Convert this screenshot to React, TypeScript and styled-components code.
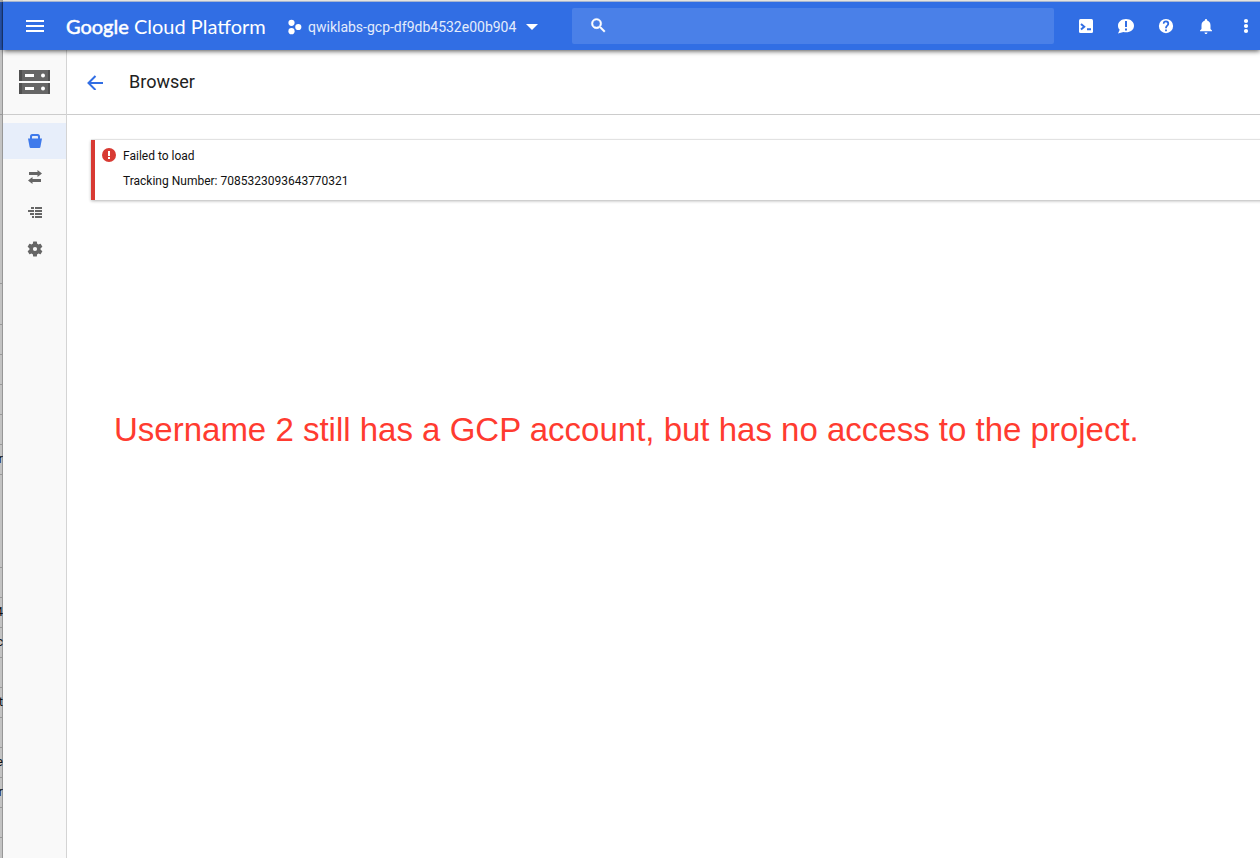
import React from "react";
import styled, { createGlobalStyle } from "styled-components";

const GlobalStyle = createGlobalStyle`
  *, *::before, *::after { box-sizing: border-box; }
  body {
    margin: 0;
    background: #fff;
    color: #212121;
    font-family: Roboto, "Liberation Sans", sans-serif;
    overflow: hidden;
  }
  button {
    display: flex;
    align-items: center;
    justify-content: center;
    padding: 0;
    border: 0;
    background: none;
    color: inherit;
    font: inherit;
    cursor: pointer;
  }
  svg { display: block; flex: none; }
`;

const Screen = styled.div`
  display: flex;
  height: 100vh;
  overflow: hidden;
`;

const Backdrop = styled.aside`
  flex: 0 0 3px;
  overflow: hidden;
  background: linear-gradient(90deg, #c3c3c3 0 66%, #979797 66%);
  font-size: 13px;
`;

const BackdropBar = styled.div`
  height: 50px;
  border-top: 2px solid #b4b4b4;
  background: linear-gradient(90deg, #2859b8 0 66%, #204690 66%);
`;

const BackdropRow = styled.div<{ $height: number }>`
  display: flex;
  align-items: center;
  justify-content: flex-end;
  height: ${(p) => p.$height}px;
  padding-bottom: 2px;
  border-bottom: 1px solid #999;
  color: #111;
`;

const Window = styled.div`
  display: flex;
  flex: 1;
  flex-direction: column;
  min-width: 0;
`;

const TopBar = styled.header`
  position: relative;
  z-index: 1;
  display: flex;
  flex: none;
  align-items: center;
  height: 50px;
  border-top: 1px solid #e4e3df;
  background: #316ee4;
  box-shadow: inset 0 1px #a5b4d0, 0 1px 5px rgba(0, 0, 0, 0.7);
  color: #fff;
`;

const MenuButton = styled.button`
  width: 63px;
  height: 48px;
`;

const Brand = styled.a`
  flex: 0 0 197px;
  min-width: 0;
  color: #fff;
  font-family: Lato, sans-serif;
  font-size: 20px;
  line-height: 24px;
  text-decoration: none;
  white-space: nowrap;
`;

const BrandStrong = styled.span`
  -webkit-text-stroke: 0.5px;
`;

const ProjectPicker = styled.button`
  flex: 0 0 252px;
  gap: 6px;
  height: 36px;
  margin: 0 32px 0 25px;
  padding-top: 2px;
  && { justify-content: flex-start; }
  font-size: 14px;
  line-height: 20px;
`;

const ProjectName = styled.span`
  min-width: 212px;
  color: #e4ecfc;
  text-align: left;
  white-space: nowrap;
`;

const Search = styled.label`
  display: flex;
  flex: 1;
  align-items: center;
  gap: 12px;
  min-width: 0;
  height: 36px;
  padding-left: 17px;
  border-radius: 2px;
  background: #4a80e8;
`;

const SearchInput = styled.input`
  flex: 1;
  min-width: 0;
  border: 0;
  outline: 0;
  background: none;
  color: #fff;
  font: 14px Roboto, sans-serif;
`;

const Actions = styled.div`
  display: flex;
  margin: 0 -6px 0 12px;
`;

const Action = styled.button`
  width: 40px;
  height: 40px;
`;

const Body = styled.div`
  display: flex;
  flex: 1;
  min-height: 0;
`;

const Sidebar = styled.nav`
  flex: 0 0 64px;
  border-right: 1px solid #d4d4d4;
  background: #f9f9f9;
`;

const Product = styled.a`
  display: flex;
  align-items: center;
  justify-content: center;
  height: 65px;
  margin-bottom: 8px;
  border-bottom: 1px solid #ccc;
`;

const NavItem = styled.a<{ $active?: boolean }>`
  display: flex;
  align-items: center;
  justify-content: center;
  height: 36px;
  background: ${(p) => (p.$active ? "#e7eefa" : "transparent")};
  color: ${(p) => (p.$active ? "#3f7aeb" : "#666")};
`;

const Content = styled.main`
  flex: 1;
  min-width: 0;
  overflow: hidden;
`;

const TitleBar = styled.div`
  display: flex;
  align-items: center;
  gap: 24px;
  height: 65px;
  padding-left: 18px;
  border-bottom: 1px solid #ccc;
`;

const BackButton = styled.button`
  width: 20px;
  height: 20px;
`;

const Title = styled.h1`
  margin: 0;
  font-size: 18px;
  font-weight: 400;
  line-height: 24px;
`;

const Alert = styled.section`
  display: flex;
  gap: 7px;
  height: 60px;
  margin: 25px -8px 0 24px;
  padding: 8px 7px;
  border-left: 4px solid #d83a33;
  box-shadow: 0 -1px #e2e2e2, 0 1px 3px rgba(0, 0, 0, 0.3);
`;

const AlertText = styled.p`
  margin: 0 0 9px;
  color: #111;
  font-size: 12px;
  line-height: 16px;
`;

const Note = styled.p`
  margin: 210px 0 0 47px;
  color: #ff3b30;
  font-family: "Liberation Sans", sans-serif;
  font-size: 33px;
  line-height: 40px;
  white-space: nowrap;
`;

const backdropRows: { height: number; text?: string }[] = [
  { height: 65 },
  { height: 169 },
  { height: 41 },
  { height: 30 },
  { height: 30 },
  { height: 30 },
  { height: 30 },
  { height: 30, text: "r" },
  { height: 93 },
  { height: 30 },
  { height: 30, text: "4" },
  { height: 30, text: "c" },
  { height: 30 },
  { height: 30, text: "t" },
  { height: 30 },
  { height: 30, text: "e" },
  { height: 30, text: "r" },
  { height: 30 },
];

const MenuIcon = () => (
  <svg width="18" height="12" viewBox="0 0 18 12" fill="currentColor">
    <path d="M0 0h18v2H0zM0 5h18v2H0zM0 10h18v2H0z" />
  </svg>
);

const ProjectIcon = () => (
  <svg width="14" height="16" viewBox="0 0 14 16" fill="currentColor">
    <circle cx="3.5" cy="3.8" r="3.100" />
    <circle cx="10.300" cy="8" r="3.100" />
    <circle cx="3.500" cy="12.200" r="3.100" />
  </svg>
);

const CaretIcon = () => (
  <svg width="12" height="6" viewBox="0 0 12 6" fill="currentColor">
    <path d="M0 0h12L6 6z" />
  </svg>
);

const SearchIcon = () => (
  <svg width="19" height="19" viewBox="0 0 24 24" fill="currentColor" stroke="currentColor" strokeWidth="0.6">
    <path d="M15.5 14h-.79l-.28-.27A6.47 6.47 0 0 0 16 9.5 6.5 6.5 0 1 0 9.5 16c1.61 0 3.09-.59 4.23-1.57l.27.28v.79l5 4.99L20.49 19l-4.99-5zm-6 0a4.5 4.5 0 1 1 0-9 4.5 4.5 0 0 1 0 9z" />
  </svg>
);

const ShellIcon = () => (
  <svg width="14" height="14" viewBox="0 0 14 14">
    <rect width="14" height="14" rx="1.5" fill="currentColor" />
    <path d="M2 5l3.2 2.700L2 10.400M8 10.200h4" fill="none" stroke="#316ee4" strokeWidth="2" />
  </svg>
);

const FeedbackIcon = () => (
  <svg width="16" height="16" viewBox="0 0 16 16">
    <path
      d="M8 1c4.600 0 8 2.900 8 6.700S12.600 14.300 8 14.300c-.9 0-1.700-.1-2.500-.3L0 15.500l1.700-3.800C.6 10.600 0 9.300 0 7.700 0 3.900 3.400 1 8 1z"
      fill="currentColor"
    />
    <path d="M7 3h2v6H7zM7 10.500h2v2H7z" fill="#316ee4" />
  </svg>
);

const HelpIcon = () => (
  <svg width="18" height="18" viewBox="0 0 24 24" fill="currentColor">
    <path d="M12 2.500a9.500 9.500 0 1 0 0 19 9.500 9.500 0 0 0 0-19zm1.200 16.500h-2.400v-2.400h2.400V19zm2.100-7.750-.9.920c-.72.730-1.200 1.330-1.200 2.830h-2.400v-.5c0-1.100.45-2.100 1.200-2.830l1.200-1.260c.37-.36.600-.86.600-1.410a2 2 0 0 0-4 0H7.800a4.200 4.200 0 0 1 8.400 0c0 .88-.36 1.680-.9 2.250z" />
  </svg>
);

const BellIcon = () => (
  <svg width="18" height="18" viewBox="0 0 24 24" fill="currentColor">
    <path d="M12 22.500c1.100 0 2-.9 2-2h-4c0 1.100.9 2 2 2zm6-6.500v-5c0-3.070-1.630-5.640-4.500-6.320V4a1.500 1.500 0 0 0-3 0v.68C7.640 5.360 6 7.920 6 11v5l-2 2v1h16v-1l-2-2z" />
  </svg>
);

const MoreIcon = () => (
  <svg width="6" height="16" viewBox="0 0 6 16" fill="currentColor">
    <circle cx="3" cy="3" r="2.100" />
    <circle cx="3" cy="8" r="2.100" />
    <circle cx="3" cy="13" r="2.100" />
  </svg>
);

const StorageIcon = () => (
  <svg width="31" height="24" viewBox="0 0 31 24">
    {[0, 13].map((y) => (
      <g key={y} transform={`translate(0 ${y})`}>
        <path d="M0 0h31v11H0z" fill="#666" />
        <path d="M0 0h3v11H0zM29 0h2v11h-2z" fill="#505050" />
        <path d="M6 4h9v3H6z" fill="#fff" />
        <circle cx="24" cy="5.500" r="2" fill="#fff" />
      </g>
    ))}
  </svg>
);

const BucketIcon = () => (
  <svg width="14" height="14" viewBox="0 0 14 14" fill="currentColor">
    <path
      fillRule="evenodd"
      d="M0 4.500h2V2.500C2 1 2.800 0 4.200 0h5.600C11.200 0 12 1 12 2.500v2h2l-1.600 8.600c-.1.600-.5.900-1.100.9H2.700c-.6 0-1-.3-1.100-.9zM4 4.500h6V2.800c0-.6-.3-.8-.8-.8H4.800c-.5 0-.8.200-.8.800z"
    />
  </svg>
);

const TransferIcon = () => (
  <svg width="14" height="14" viewBox="0 0 14 14" fill="currentColor">
    <path d="M1 2h8.500V0L14 3.500 9.500 7V5H1zM13 9H4.500V7L0 10.500 4.500 14v-2H13z" />
  </svg>
);

const AppliancesIcon = () => (
  <svg width="14" height="12" viewBox="0 0 14 12" fill="currentColor">
    <path d="M3 0h3v2H3zM7 0h7v2H7zM0 3h6v2H0zM7 3h7v2H7zM2 6h4v2H2zM7 6h7v2H7zM4 9h2v2H4zM7 9h7v2H7z" />
  </svg>
);

const GearIcon = () => (
  <svg width="18" height="18" viewBox="0 0 24 24" fill="currentColor">
    <path d="M19.430 12.980a7.800 7.800 0 0 0 0-1.960l2.110-1.650a.5.500 0 0 0 .12-.64l-2-3.460a.5.500 0 0 0-.61-.22l-2.490 1a7.300 7.300 0 0 0-1.690-.98l-.38-2.650A.49.490 0 0 0 14 2h-4a.49.490 0 0 0-.49.420l-.38 2.650c-.61.250-1.170.590-1.690.980l-2.490-1a.49.490 0 0 0-.61.220l-2 3.460a.49.490 0 0 0 .12.640l2.110 1.650a7.900 7.900 0 0 0 0 1.960l-2.110 1.650a.5.500 0 0 0-.12.640l2 3.460c.12.220.39.300.61.220l2.490-1c.52.400 1.080.730 1.690.980l.38 2.650c.03.240.24.420.49.420h4c.25 0 .46-.18.490-.42l.38-2.650c.61-.25 1.170-.59 1.690-.98l2.490 1c.23.090.49 0 .61-.22l2-3.460a.5.500 0 0 0-.12-.64zM12 14.800a2.800 2.800 0 1 1 0-5.600 2.800 2.800 0 0 1 0 5.600z" />
  </svg>
);

const BackIcon = () => (
  <svg width="16" height="16" viewBox="0 0 16 16" fill="none" stroke="#316ee4" strokeWidth="2">
    <path d="M16 9H1.500M8.500 2L1.500 9l7 7" />
  </svg>
);

const ErrorIcon = () => (
  <svg width="14" height="14" viewBox="0 0 14 14">
    <circle cx="7" cy="7" r="7" fill="#d83a33" />
    <path d="M6 3h2v5H6zM6 9h2v2H6z" fill="#fff" />
  </svg>
);

const actions = [
  { label: "Activate Cloud Shell", Icon: ShellIcon },
  { label: "Send feedback", Icon: FeedbackIcon },
  { label: "Help", Icon: HelpIcon },
  { label: "Notifications", Icon: BellIcon },
  { label: "More options", Icon: MoreIcon },
];

const navItems = [
  { label: "Browser", Icon: BucketIcon, active: true },
  { label: "Transfer", Icon: TransferIcon },
  { label: "Transfer Appliance", Icon: AppliancesIcon },
  { label: "Settings", Icon: GearIcon },
];

export default function App() {
  return (
    <>
      <GlobalStyle />
      <Screen>
        <Backdrop aria-hidden="true">
          <BackdropBar />
          {backdropRows.map((row, i) => (
            <BackdropRow key={i} $height={row.height}>
              {row.text}
            </BackdropRow>
          ))}
        </Backdrop>
        <Window>
          <TopBar>
            <MenuButton aria-label="Main menu">
              <MenuIcon />
            </MenuButton>
            <Brand href="#home">
              <BrandStrong>Google</BrandStrong> Cloud Platform
            </Brand>
            <ProjectPicker>
              <ProjectIcon />
              <ProjectName>qwiklabs-gcp-df9db4532e00b904</ProjectName>
              <CaretIcon />
            </ProjectPicker>
            <Search>
              <SearchIcon />
              <SearchInput type="text" aria-label="Search" />
            </Search>
            <Actions>
              {actions.map(({ label, Icon }) => (
                <Action key={label} aria-label={label}>
                  <Icon />
                </Action>
              ))}
            </Actions>
          </TopBar>
          <Body>
            <Sidebar>
              <Product href="#storage" aria-label="Storage">
                <StorageIcon />
              </Product>
              {navItems.map(({ label, Icon, active }) => (
                <NavItem key={label} href="#nav" aria-label={label} $active={active}>
                  <Icon />
                </NavItem>
              ))}
            </Sidebar>
            <Content>
              <TitleBar>
                <BackButton aria-label="Back">
                  <BackIcon />
                </BackButton>
                <Title>Browser</Title>
              </TitleBar>
              <Alert role="alert">
                <ErrorIcon />
                <div>
                  <AlertText>Failed to load</AlertText>
                  <AlertText>Tracking Number: 7085323093643770321</AlertText>
                </div>
              </Alert>
              <Note>Username 2 still has a GCP account, but has no access to the project.</Note>
            </Content>
          </Body>
        </Window>
      </Screen>
    </>
  );
}
